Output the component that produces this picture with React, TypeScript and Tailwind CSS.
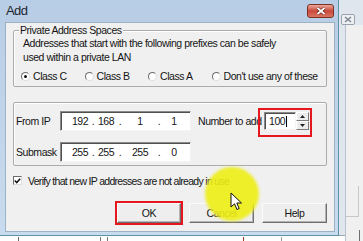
import React from 'react';

function Radio({ label, checked, wide }: { label: string; checked?: boolean; wide?: boolean }) {
    return (
        <div className={`flex items-center gap-[3px] whitespace-nowrap ${wide ? '' : 'w-[63.5px]'}`}>
            <span className="relative h-[9px] w-[9px] shrink-0 rounded-full border border-t-[#6b6b6b] border-l-[#6b6b6b] border-r-[#dedede] border-b-[#dedede] bg-white">
                {checked && <span className="absolute left-[2px] top-[2px] h-[3px] w-[3px] rounded-full bg-[#111]" />}
            </span>
            <span>{label}</span>
        </div>
    );
}

function IpBox({ parts }: { parts: string[] }) {
    return (
        <div className="flex h-[20px] w-[131px] items-center border border-t-[#8a8a8a] border-l-[#8a8a8a] border-r-[#f4f4f4] border-b-[#f4f4f4] bg-white pl-[7px] shadow-[inset_1px_1px_0_#505050]">
            <span className="flex w-[24px] justify-center">{parts[0]}</span>
            <span className="flex w-[2px] justify-center">.</span>
            <span className="flex w-[24px] justify-center">{parts[1]}</span>
            <span className="flex w-[4px] justify-center">.</span>
            <span className="flex w-[36px] justify-center">{parts[2]}</span>
            <span className="flex w-[2px] justify-center">.</span>
            <span className="flex w-[28px] justify-center">{parts[3]}</span>
        </div>
    );
}

function Button({ children }: { children: React.ReactNode }) {
    return (
        <div className="flex h-[20px] w-[65px] items-center justify-center border border-t-[#fbfbfb] border-l-[#fbfbfb] border-r-[#6f6f6f] border-b-[#6f6f6f] bg-[#eeeeee] shadow-[inset_-1px_-1px_0_#b4b4b4]">
            {children}
        </div>
    );
}

function Spinner() {
    return (
        <div className="relative ml-[2px] flex h-[18px]">
            <div className="flex w-[32px] items-center border border-t-[#8a8a8a] border-l-[#8a8a8a] border-r-[#f4f4f4] border-b-[#f4f4f4] bg-white pl-[4px] shadow-[inset_1px_1px_0_#505050]">
                <span>100</span>
                <span className="ml-[1px] h-[11px] w-[1px] bg-black" />
            </div>
            <div className="flex w-[13px] flex-col">
                <div className="flex flex-1 items-center justify-center border border-t-white border-l-white border-r-[#7a7a7a] border-b-[#7a7a7a] bg-[#ececec]">
                    <svg width="5" height="3" viewBox="0 0 5 3"><path d="M2.5 0 L5 3 L0 3 Z" fill="#222" /></svg>
                </div>
                <div className="flex flex-1 items-center justify-center border border-t-white border-l-white border-r-[#7a7a7a] border-b-[#7a7a7a] bg-[#ececec]">
                    <svg width="5" height="3" viewBox="0 0 5 3"><path d="M0 0 L5 0 L2.5 3 Z" fill="#222" /></svg>
                </div>
            </div>
            <div className="absolute left-[-6px] top-[-4px] right-[-3px] bottom-[-7px] border-2 border-[#e5161e]" />
        </div>
    );
}

export default function App() {
    return (
        <div className="relative h-[241px] w-[363px] overflow-hidden bg-white font-['Liberation_Sans',Arial,sans-serif] text-[10.5px] leading-[14px] tracking-[-0.45px] text-[#151515]">
            {/* marks of the page below */}
            <div className="absolute left-[18px] top-[237px] h-[4px] w-[1px] bg-[#666]" />
            <div className="absolute left-[100px] top-[237px] h-[4px] w-[1px] bg-[#777]" />
            <div className="absolute left-[107px] top-[237px] h-[4px] w-[1px] bg-[#777]" />
            <div className="absolute left-[243px] top-[237px] h-[4px] w-[1px] bg-[#9a3a20]" />
            <div className="absolute left-[281px] top-[237px] h-[4px] w-[1px] bg-[#999]" />
            <div className="absolute left-[355px] top-[237px] h-[4px] w-[1px] bg-[#999]" />

            {/* window behind */}
            <div className="absolute left-[330px] top-[-4px] flex h-[240px] w-[40px] flex-col border border-[#9aa8b4] bg-[#dfe6ee]">
                <div className="flex h-[30px] items-start pl-[10px] pt-[17px]">
                    <div className="flex h-[11px] w-[14px] items-center justify-center rounded-[2px] border border-[#9aa3ad] bg-[#eef1f4]">
                        <svg width="8" height="7" viewBox="0 0 8 7"><path d="M1 1 L7 6 M7 1 L1 6" stroke="#7d8894" strokeWidth="1.6" /></svg>
                    </div>
                </div>
                <div className="mb-[3px] ml-[14px] flex-1 border-l border-[#b8c2cc] bg-[#f0f0f0] pr-[10px] pt-[161px]">
                    <div className="h-[31px] border-b border-r border-[#c8c8c8]" />
                    <div className="mt-[13px] ml-[2px] h-[15px] w-[12px] border-b border-r border-[#707070]" />
                </div>
            </div>

            {/* dialog */}
            <div className="absolute left-[-1px] top-[-8px] flex h-[244px] w-[340px] flex-col rounded-t-[6px] border border-[#5f93a8] bg-gradient-to-b from-[#b7cde5] to-[#c9dbee]">
                <div className="flex h-[29px] shrink-0 items-start justify-between pl-[6px] pr-[4px]">
                    <span className="mt-[10px] text-[13px] leading-[16px] tracking-[-0.6px] text-[#1d2530]">Add</span>
                    <div className="mt-[11px] flex h-[14px] w-[27px] items-center justify-center rounded-[3px] border border-[#7c3026] bg-gradient-to-b from-[#e9a89a] via-[#c9473a] to-[#d97563]">
                        <svg width="10" height="8" viewBox="0 0 10 8">
                            <path d="M1.5 1 L8.5 7 M8.5 1 L1.5 7" stroke="#5a1a12" strokeWidth="3" />
                            <path d="M1.5 1 L8.5 7 M8.5 1 L1.5 7" stroke="#fff" strokeWidth="1.8" />
                        </svg>
                    </div>
                </div>

                <div className="mb-[3px] ml-[5px] mr-[3px] flex flex-1 flex-col border border-[#9db2c5] bg-[#f0f0f0] px-[7px]">
                    {/* group 1 */}
                    <div className="relative mt-[7px] h-[57px] rounded-[2px] border border-[#ababab] pl-[9px] pt-[5px] shadow-[inset_1px_1px_0_#fff]">
                        <span className="absolute left-[5px] top-[-8px] bg-[#f0f0f0] px-[1px]">Private Address Spaces</span>
                        <div>Addresses that start with the following prefixes can be safely</div>
                        <div>used within a private LAN</div>
                        <div className="ml-[-2px] mt-[5px] flex h-[14px] items-center">
                            <Radio label="Class C" checked />
                            <Radio label="Class B" />
                            <Radio label="Class A" />
                            <Radio label="Don't use any of these" wide />
                        </div>
                    </div>

                    {/* group 2 */}
                    <div className="mt-[15px] flex h-[64px] flex-col gap-[11px] rounded-[2px] border border-[#ababab] pl-[2px] pt-[8px] shadow-[inset_1px_1px_0_#fff]">
                        <div className="flex h-[20px] items-center">
                            <span className="w-[44px]">From IP</span>
                            <IpBox parts={['192', '168', '1', '1']} />
                            <span className="ml-[7px] w-[64px] whitespace-nowrap">Number to add</span>
                            <Spinner />
                        </div>
                        <div className="flex h-[20px] items-center">
                            <span className="w-[44px]">Submask</span>
                            <IpBox parts={['255', '255', '255', '0']} />
                        </div>
                    </div>

                    {/* checkbox */}
                    <div className="mt-[8px] flex h-[13px] items-center">
                        <span className="flex h-[9px] w-[9px] items-center justify-center border border-t-[#6b6b6b] border-l-[#6b6b6b] border-r-[#dedede] border-b-[#dedede] bg-white">
                            <svg width="7" height="6" viewBox="0 0 7 6"><path d="M0.8 2.6 L2.7 4.6 L6.2 0.8" fill="none" stroke="#111" strokeWidth="1.5" /></svg>
                        </span>
                        <span className="ml-[6px] tracking-[-0.7px]">Verify that new IP addresses are not already in use</span>
                    </div>

                    {/* buttons */}
                    <div className="mt-[16px] flex justify-end gap-[8px]">
                        <div className="relative">
                            <div className="flex h-[20px] w-[64px] items-center justify-center border border-t-[#fbfbfb] border-l-[#fbfbfb] border-r-[#6f6f6f] border-b-[#6f6f6f] bg-[#eeeeee] shadow-[inset_-1px_-1px_0_#b4b4b4]">OK</div>
                            <div className="absolute -inset-[2px] border-2 border-[#e5161e]" />
                        </div>
                        <Button>Cancel</Button>
                        <Button>Help</Button>
                    </div>
                </div>
            </div>

            {/* highlight and pointer */}
            <div className="absolute left-[205px] top-[167px] h-[54px] w-[54px] rounded-full bg-[#eeee14] opacity-90 blur-[1.5px]" />
            <svg className="absolute left-[230px] top-[192px]" width="13" height="19" viewBox="0 0 13 19">
                <path d="M1 1 L1 15 L4.5 11.8 L7 17.5 L9.2 16.5 L6.8 11 L11.5 11 Z" fill="#fff" stroke="#111" strokeWidth="1" strokeLinejoin="round" />
            </svg>
        </div>
    );
}
